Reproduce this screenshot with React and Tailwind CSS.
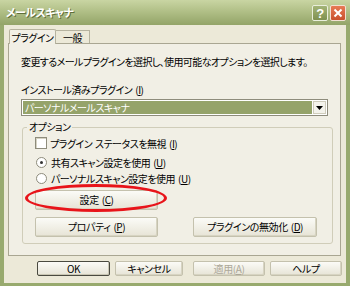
import React from 'react';

const font = "font-['Noto_Sans_CJK_JP','Noto_Sans_CJK_SC',sans-serif] [font-feature-settings:'palt']";

function Key({ k }) {
  return (
    <span className="ml-[3px] tracking-[-0.5px]">
      (<u>{k}</u>)
    </span>
  );
}

function Btn({ children, className = '', disabled = false, def = false }) {
  return (
    <div
      className={
        'flex items-center justify-center whitespace-nowrap rounded-[2px] border bg-gradient-to-b from-[#fbfbf7] to-[#e7e4d6] text-[10px] tracking-[-0.4px] leading-none ' +
        (def
          ? 'border-[#4a4a40] shadow-[inset_-1px_-1px_0_#c9c6b4] '
          : 'border-[#c4c1ad] shadow-[inset_-1px_-1px_0_#d7d4c2] ') +
        (disabled ? 'text-[#aca899] ' : 'text-black ') +
        className
      }
    >
      {children}
    </div>
  );
}

export default function App() {
  return (
    <div className={`w-[350px] h-[286px] flex flex-col bg-[#98aa6e] overflow-hidden ${font} text-[10px] tracking-[-0.5px] whitespace-nowrap text-black`}>
      {/* title bar */}
      <div className="h-[25px] flex items-center justify-between pl-[6px] pr-[4px] bg-gradient-to-b from-[#c9d5a3] via-[#aebd84] to-[#93a468]">
        <span className="text-white text-[11px] font-bold [text-shadow:1px_1px_0_#5f6e3c] tracking-[-0.6px]">
          メールスキャナ
        </span>
        <div className="flex gap-[2px] mt-[1px]">
          <div className="w-[16px] h-[16px] rounded-[2px] border border-[#e9eedb] bg-gradient-to-b from-[#a3b477] to-[#7f9150] flex items-center justify-center text-white text-[13px] font-bold font-['Liberation_Sans',sans-serif] leading-none">
            ?
          </div>
          <div className="w-[16px] h-[16px] rounded-[2px] border border-[#f3dfd2] bg-gradient-to-b from-[#e77a55] to-[#c9502d] flex items-center justify-center">
            <svg width="10" height="10" viewBox="0 0 10 10">
              <path d="M1.5 1.5 L8.5 8.5 M8.5 1.5 L1.5 8.5" stroke="white" strokeWidth="2" />
            </svg>
          </div>
        </div>
      </div>

      {/* body */}
      <div className="flex-1 mx-[4px] mb-[3px] bg-[#ece9d8] flex flex-col">
        {/* tabs */}
        <div className="flex items-end h-[18px] pl-[5px]">
          <div className="h-[15px] w-[47px] border border-b-0 border-[#b6b39f] bg-[#f2f0e6] rounded-t-[2px] flex items-center justify-center relative top-[1px]">
            プラグイン
          </div>
          <div className="h-[13px] w-[34px] border border-l-0 border-b-0 border-[#b6b39f] flex items-center justify-center">
            一般
          </div>
        </div>

        {/* panel */}
        <div className="ml-[4px] w-[333px] h-[213px] border border-[#a9a692] bg-[#f1efe5] pl-[12px] pt-[11px] flex flex-col">
          <div className="h-[14px] leading-[14px] tracking-[-0.6px]">
            変更するメールプラグインを選択し、使用可能なオプションを選択します。
          </div>
          <div className="mt-[14px] h-[14px] leading-[14px]">
            インストール済みプラグイン<Key k="I" />
          </div>
          <div className="mt-[2px] w-[307px] h-[17px] border border-[#8e8c7c] bg-white flex items-center p-[1px]">
            <div className="flex-1 h-full bg-[#95a36a] text-white leading-[13px] pl-[2px]">
              パーソナルメールスキャナ
            </div>
            <div className="w-[13px] h-full ml-[1px] bg-[#f4f3ec] border border-[#cfccbb] flex items-center justify-center">
              <svg width="7" height="4" viewBox="0 0 7 4">
                <path d="M0 0 H7 L3.5 4 Z" fill="black" />
              </svg>
            </div>
          </div>

          {/* group box */}
          <div className="relative mt-[11px] ml-[1px] w-[311px] h-[117px] border border-[#d0cdb9] rounded-[3px] pl-[12px] pt-[8px] flex flex-col">
            <span className="absolute -top-[8px] left-[4px] px-[2px] bg-[#f1efe5] leading-[14px]">
              オプション
            </span>
            <div className="flex items-center h-[14px]">
              <div className="w-[12px] h-[12px] border border-[#8e8c7c] bg-white shadow-[inset_1px_1px_0_#d6d3c4]" />
              <span className="ml-[3px]">
                プラグイン<span className="ml-[3px]">ステータスを無視</span><Key k="I" />
              </span>
            </div>
            <div className="flex items-center h-[14px] mt-[5px]">
              <div className="w-[11px] h-[11px] rounded-full border border-[#8e8c7c] bg-white flex items-center justify-center ml-[1px]">
                <div className="w-[3px] h-[3px] rounded-full bg-[#333]" />
              </div>
              <span className="ml-[4px]">
                共有スキャン設定を使用<Key k="U" />
              </span>
            </div>
            <div className="flex items-center h-[14px] mt-[2px]">
              <div className="w-[11px] h-[11px] rounded-full border border-[#8e8c7c] bg-white ml-[1px]" />
              <span className="ml-[4px]">
                パーソナルスキャン設定を使用<Key k="U" />
              </span>
            </div>
            <Btn className="mt-[5px] w-[123px] h-[20px] relative">
              設定<Key k="C" />
              <div className="absolute left-[-11px] top-[-7px] w-[142px] h-[28px] rounded-[50%] border-[3px] border-[#e8141a]" />
            </Btn>
            <div className="flex mt-[7px] gap-[35px]">
              <Btn className="w-[123px] h-[20px]">
                プロパティ<Key k="P" />
              </Btn>
              <Btn className="w-[124px] h-[20px]">
                プラグインの無効化<Key k="D" />
              </Btn>
            </div>
          </div>
        </div>

        {/* footer buttons */}
        <div className="flex mt-[5px] pl-[33px]">
          <Btn def className="w-[73px] h-[15px]">OK</Btn>
          <Btn className="ml-[5px] w-[68px] h-[15px]">キャンセル</Btn>
          <Btn disabled className="ml-[10px] w-[72px] h-[15px]">
            適用(<u>A</u>)
          </Btn>
          <Btn className="ml-[5px] w-[72px] h-[15px]">ヘルプ</Btn>
        </div>
      </div>
    </div>
  );
}
